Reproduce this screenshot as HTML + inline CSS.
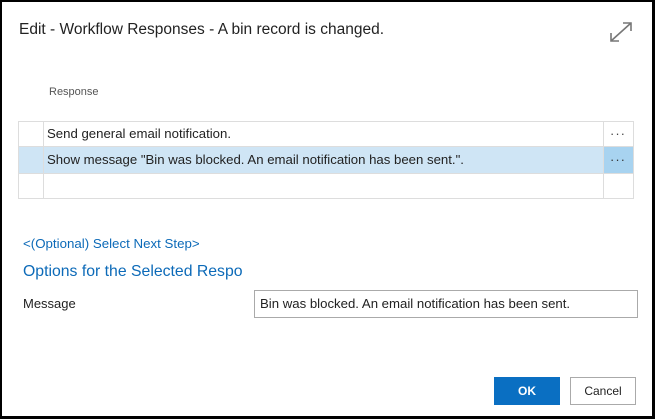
<!DOCTYPE html>
<html><head><style>
*{margin:0;padding:0;box-sizing:border-box}
body{width:655px;height:419px;background:#fff;font-family:"Liberation Sans",sans-serif;position:relative;overflow:hidden}
.frame{position:absolute;left:0;top:0;width:655px;height:419px;border:2px solid #000;border-right-width:3px;border-bottom-width:3px}
.abs{position:absolute;white-space:nowrap}
</style></head><body>
<div class="frame"></div>
<div class="abs" style="left:19px;top:21px;font-size:15.5px;color:#222">Edit - Workflow Responses - A bin record is changed.</div>
<svg class="abs" style="left:608px;top:20px" width="26" height="24" viewBox="0 0 26 24"><path d="M3 21 L23 3 M15 3 H23 V11 M3 13 V21 H11" fill="none" stroke="#777" stroke-width="1.6"/></svg>
<div class="abs" style="left:49px;top:86px;font-size:11px;color:#555">Response</div>
<div class="abs" style="left:18px;top:121px;width:616px;height:78px;border:1px solid #ddd"></div>
<div class="abs" style="left:19px;top:147px;width:614px;height:26px;background:#cfe5f5"></div>
<div class="abs" style="left:603px;top:147px;width:30px;height:26px;background:#a8d3f0"></div>
<div class="abs" style="left:19px;top:146px;width:614px;height:1px;background:#ddd"></div>
<div class="abs" style="left:19px;top:173px;width:614px;height:1px;background:#ddd"></div>
<div class="abs" style="left:43px;top:122px;width:1px;height:76px;background:#ddd"></div>
<div class="abs" style="left:603px;top:122px;width:1px;height:76px;background:#ddd"></div>
<div class="abs" style="left:47px;top:126px;font-size:13.2px;color:#222">Send general email notification.</div>
<div class="abs" style="left:47px;top:152px;font-size:13.2px;color:#222">Show message "Bin was blocked. An email notification has been sent.".</div>
<div class="abs" style="left:610px;top:126px;font-size:13px;color:#444;letter-spacing:1px">···</div>
<div class="abs" style="left:610px;top:152px;font-size:13px;color:#333;letter-spacing:1px">···</div>
<div class="abs" style="left:23px;top:236px;font-size:13.3px;color:#0c6ab8">&lt;(Optional) Select Next Step&gt;</div>
<div class="abs" style="left:23px;top:263px;font-size:15.8px;color:#0c6ab8">Options for the Selected Respo</div>
<div class="abs" style="left:23px;top:296px;font-size:13px;color:#222">Message</div>
<div class="abs" style="left:254px;top:290px;width:384px;height:28px;border:1px solid #aaa;padding:5px 0 0 5px;font-size:13.2px;color:#222">Bin was blocked. An email notification has been sent.</div>
<div class="abs" style="left:494px;top:377px;width:66px;height:28px;background:#0a6fc2;color:#fff;font-size:12px;font-weight:bold;text-align:center;line-height:28px">OK</div>
<div class="abs" style="left:570px;top:377px;width:66px;height:28px;border:1px solid #aaa;background:#fff;color:#222;font-size:12px;text-align:center;line-height:26px">Cancel</div>
</body></html>
